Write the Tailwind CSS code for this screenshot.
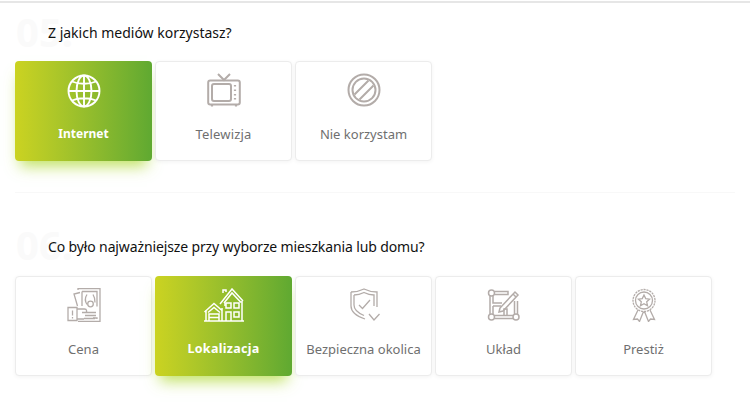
<!DOCTYPE html>
<html lang="pl">
<head>
<meta charset="utf-8">
<script src="https://cdn.jsdelivr.net/npm/@tailwindcss/browser@4"></script>
</head>
<body class="w-[750px] h-[420px] overflow-hidden bg-white font-['Noto_Sans',sans-serif]">
<div class="h-[3px] bg-white border-b-2 border-[#e6e6e6]"></div>
<main class="px-[15px]">
  <section class="h-[190px] border-b border-[#f8f8f8]">
    <div class="relative h-[58px]">
      <span class="absolute left-[1px] top-[5px] text-[40px] leading-[48px] font-bold text-[#fafafa]">05.</span>
      <h2 class="absolute left-[33px] top-[19px] text-[14px] leading-[22px] text-[#111]">Z jakich mediów korzystasz?</h2>
    </div>
    <div class="flex gap-[3px]">
      <div class="w-[137px] h-[100px] rounded-[4px] bg-linear-to-r from-[#cbd321] to-[#5fa931] shadow-[0_10px_14px_-5px_rgba(170,215,40,0.75)] flex flex-col items-center text-white">
        <svg class="mt-[13px] w-[34px] h-[34px]" viewBox="0 0 34 34" fill="none" stroke="currentColor" stroke-width="1.900">
          <circle cx="17" cy="17" r="15.500"/><ellipse cx="17" cy="17" rx="7.500" ry="15.500"/><path d="M17 1.500v31M1.500 17h31M5 7.500c7 3 17 3 24 0M5 26.500c7-3 17-3 24 0"/>
        </svg>
        <span class="mt-[16px] text-[12px] leading-[20px] font-bold">Internet</span>
      </div>
      <div class="w-[137px] h-[100px] rounded-[4px] bg-white border border-[#ececec] shadow-[0_1px_4px_rgba(0,0,0,0.05)] flex flex-col items-center text-[#6f6f6f]">
        <svg class="mt-[11px] w-[34px] h-[34px] text-[#b3aca9]" viewBox="0 0 34 34" fill="none" stroke="currentColor" stroke-width="2">
          <path d="M11 1l6 6 6-6"/><rect x="1.200" y="7.500" width="31.600" height="24" rx="2"/><rect x="5" y="11" width="19" height="17" rx="2"/><path d="M28 12v1.500M28 16.500V18M28 21v1.500M28 25v1.500M5 31.500v2M29 31.500v2" stroke-width="2.200"/>
        </svg>
        <span class="mt-[17px] text-[13px] leading-[20px] tracking-[0.2px]">Telewizja</span>
      </div>
      <div class="w-[137px] h-[100px] rounded-[4px] bg-white border border-[#ececec] shadow-[0_1px_4px_rgba(0,0,0,0.05)] flex flex-col items-center text-[#6f6f6f]">
        <svg class="mt-[11px] w-[34px] h-[34px] text-[#b3aca9]" viewBox="0 0 34 34" fill="none" stroke="currentColor" stroke-width="2">
          <circle cx="17" cy="17" r="15.500"/><circle cx="17" cy="17" r="11.500"/><path d="M7.500 21.500L21.500 7.500M12.500 26.500L26.500 12.500"/>
        </svg>
        <span class="mt-[17px] text-[13px] leading-[20px]">Nie korzystam</span>
      </div>
    </div>
  </section>
  <section>
    <div class="relative h-[83px]">
      <span class="absolute left-[1px] top-[28px] text-[40px] leading-[48px] font-bold text-[#fafafa]">06.</span>
      <h2 class="absolute left-[33px] top-[43px] text-[14px] leading-[22px] tracking-[-0.13px] text-[#111]">Co było najważniejsze przy wyborze mieszkania lub domu?</h2>
    </div>
    <div class="flex gap-[3px]">
      <div class="w-[137px] h-[100px] rounded-[4px] bg-white border border-[#ececec] shadow-[0_1px_4px_rgba(0,0,0,0.05)] flex flex-col items-center text-[#6f6f6f]">
        <svg class="mt-[11px] w-[34px] h-[34px] text-[#b3aca9]" viewBox="0 0 34 34" fill="none" stroke="currentColor" stroke-width="1.300">
          <path d="M11 2V.7h22v32.600H11M13 4.500L7 6l3.500 12"/>
          <path d="M15 3.500h15v15M30 31v-1H26M15 3.500V18"/>
          <path d="M20 6.500c-2 3-2 7 0 10M26 6.500c2 3 2 6 2 8"/>
          <circle cx="23.500" cy="16" r="2.800"/>
          <path d="M1 19.500h9v13H1zM5.500 22.500v5M5.500 29v1.500M10 21h7.500c2.500 0 3 3.500.5 3.500H15M18 24.500h11M18 27.500h11M17 30.500h11M10 31h7"/>
        </svg>
        <span class="mt-[17px] text-[13px] leading-[20px]">Cena</span>
      </div>
      <div class="w-[137px] h-[100px] rounded-[4px] bg-linear-to-r from-[#cbd321] to-[#5fa931] shadow-[0_10px_14px_-5px_rgba(170,215,40,0.75)] flex flex-col items-center text-white">
        <svg class="mt-[12px] w-[40px] h-[34px]" viewBox="0 0 40 34" fill="none" stroke="currentColor" stroke-width="1.500">
          <path d="M0 33h40M2 33V22M.5 24L10 15.500l8 7M4 24.500l6-5 6 5M5 33v-7h10v7M5 29.500h10"/>
          <path d="M18 33V20M16 16L28 1l11 12M20 15L28 5l9 9.500M38 13v20M21 15v3"/>
          <path d="M22 15h5v5h-5zM30 15h5v5h-5zM30 24h5v5h-5zM22 33V24h5v9M19 5V2h3v2"/>
        </svg>
        <span class="mt-[17px] text-[12.500px] leading-[20px] font-bold tracking-[0.3px]">Lokalizacja</span>
      </div>
      <div class="w-[137px] h-[100px] rounded-[4px] bg-white border border-[#ececec] shadow-[0_1px_4px_rgba(0,0,0,0.05)] flex flex-col items-center text-[#6f6f6f]">
        <svg class="mt-[11px] w-[34px] h-[34px] text-[#b3aca9]" viewBox="0 0 34 34" fill="none" stroke="currentColor" stroke-width="1.300">
          <path d="M4 4c5 0 9-1 13-3 4 2 8 3 13 3v15"/><path d="M4 4v14c0 6 5 10 14 13"/><path d="M7 7c4 0 7-1 10-2.500 3 1.500 6 2.500 10 2.500v11M7 7v10c0 5 4 8 10 10.500"/><path d="M12 17l3.500 3.500L23 12"/><path d="M22 26l5 6 5.500-6"/>
        </svg>
        <span class="mt-[17px] text-[13px] leading-[20px]">Bezpieczna okolica</span>
      </div>
      <div class="w-[137px] h-[100px] rounded-[4px] bg-white border border-[#ececec] shadow-[0_1px_4px_rgba(0,0,0,0.05)] flex flex-col items-center text-[#6f6f6f]">
        <svg class="mt-[11px] w-[34px] h-[34px] text-[#b3aca9]" viewBox="0 0 34 34" fill="none" stroke="currentColor" stroke-width="1.500">
          <circle cx="4.500" cy="5" r="3"/><circle cx="4.500" cy="29" r="3"/><circle cx="29" cy="29" r="3"/>
          <path d="M8 3.500h13v3H8M3 8v18M6 8v7h9M6 18h8M6 18v8M8 27.500h18M8 30.500h18M17 27v-6h3v6M27.500 13v13M30.500 13v13"/>
          <path d="M13 20l-1 4 4-1L31 7l-3-3zM26 6l3 3"/>
        </svg>
        <span class="mt-[17px] text-[13px] leading-[20px]">Układ</span>
      </div>
      <div class="w-[137px] h-[100px] rounded-[4px] bg-white border border-[#ececec] shadow-[0_1px_4px_rgba(0,0,0,0.05)] flex flex-col items-center text-[#6f6f6f]">
        <svg class="mt-[11px] w-[34px] h-[34px] text-[#b3aca9]" viewBox="0 0 34 34" fill="none" stroke="currentColor" stroke-width="1.300">
          <circle cx="17" cy="12.500" r="11" stroke-dasharray="2.200 0.800"/><circle cx="17" cy="12.500" r="8.500"/>
          <path d="M17 7l1.700 3.600 3.900.5-2.900 2.700.8 3.900-3.500-2-3.500 2 .8-3.900-2.900-2.700 3.900-.5z"/>
          <path d="M11 22l-4.500 9.500 4-.5 2 2.500 4-10M23 22l4.500 9.500-4-.5-2 2.500-4-10"/>
        </svg>
        <span class="mt-[17px] text-[13px] leading-[20px]">Prestiż</span>
      </div>
    </div>
  </section>
</main>
</body>
</html>
